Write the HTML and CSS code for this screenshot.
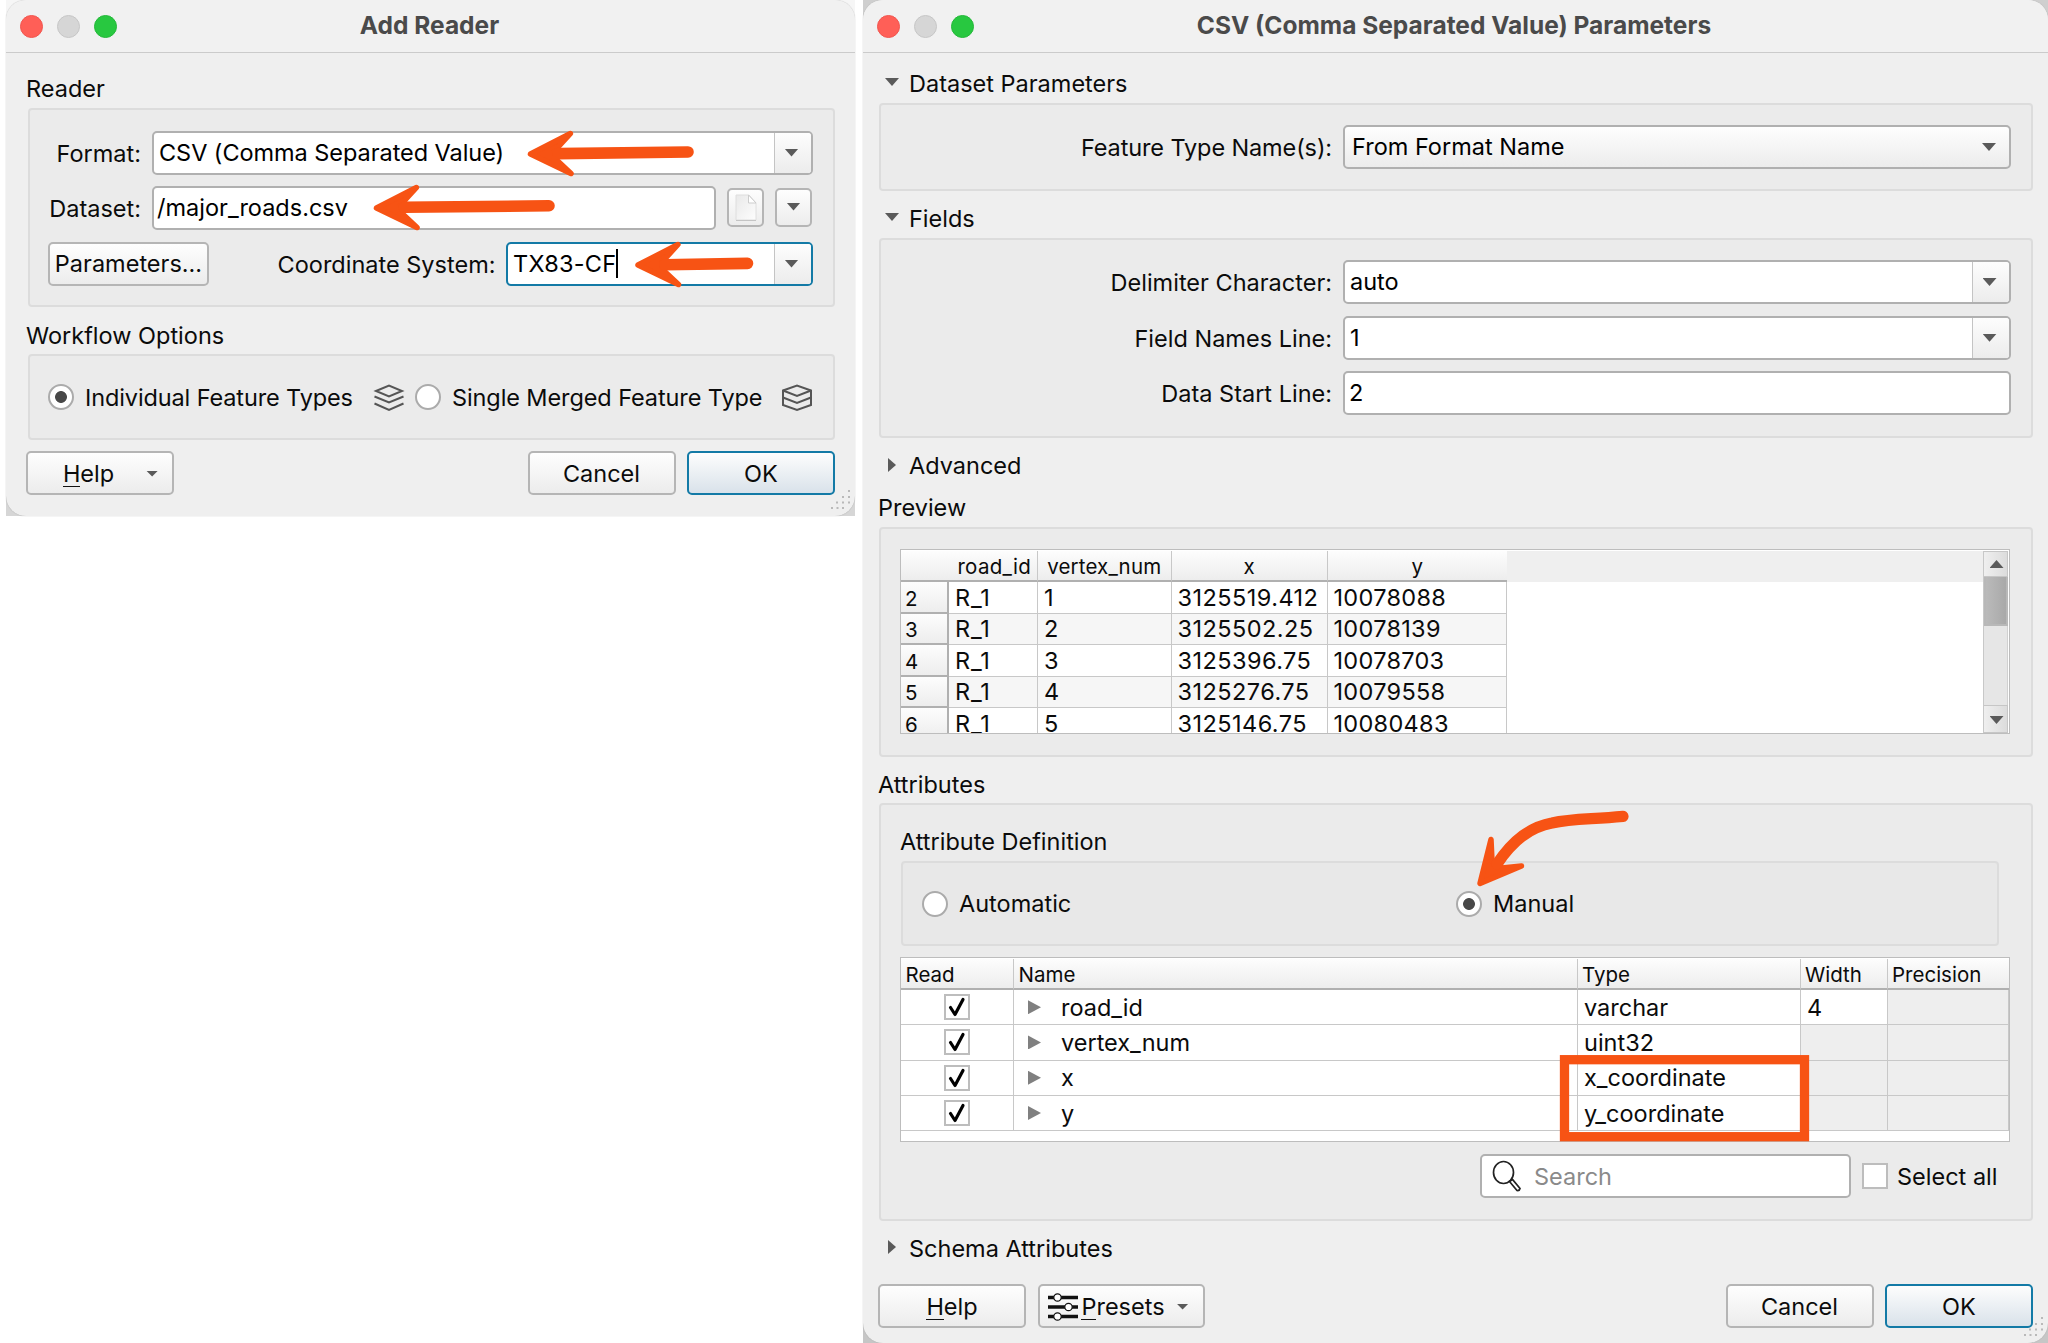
FILE: index.html
```html
<!DOCTYPE html>
<html lang="en">
<head>
<meta charset="utf-8">
<title>Add Reader</title>
<link rel="stylesheet" href="styles.css">
</head>
<body>
<main class="desktop">
  <section class="backing backing-reader">
    <div class="window">
      <header class="titlebar"><span class="light red"></span><span class="light grey"></span><span class="light green"></span><h1>Add Reader</h1></header>
      <div class="content">
        <h2 class="first-label">Reader</h2>
        <div class="group reader-group">
          <div class="row">
            <label class="name">Format:</label>
            <div class="field combo grow"><span class="format">CSV (Comma Separated Value)</span><i class="drop"><b class="down"></b></i></div>
          </div>
          <div class="row">
            <label class="name">Dataset:</label>
            <div class="field dataset"><span>/major_roads.csv</span></div>
            <button class="tool"><svg width="24" height="30" viewBox="0 0 24 30"><defs><linearGradient id="pg" x1="0" y1="0" x2="1" y2="1"><stop offset="0" stop-color="#e9e9e9"/><stop offset="1" stop-color="#fdfdfd"/></linearGradient></defs><path d="M2 2h13l7 8v17H2z" fill="url(#pg)" stroke="#dedede"/><path d="M2 27.500h20" stroke="#c4c4c4"/><path d="M14.500 2v8H22z" fill="#fff" stroke="#cdcdcd"/></svg></button>
            <button class="tool last"><b class="down"></b></button>
          </div>
          <div class="row">
            <button class="btn params">Parameters...</button>
            <label class="coord">Coordinate System:</label>
            <div class="field combo focus grow"><span class="code">TX83-CF</span><em class="caret"></em><i class="drop"><b class="down"></b></i></div>
          </div>
        </div>
        <h2 class="second-label">Workflow Options</h2>
        <div class="group options">
          <span class="radio on"></span><label class="opt1">Individual Feature Types</label>
          <svg class="stack" width="32" height="30" viewBox="0 0 32 30" fill="none" stroke="#555" stroke-width="2"><path d="M3 8L16 2.500L29 8L16 13.500Z"/><path d="M1.500 13.500L16 19.500L30.500 13.500M1.500 20.500L16 27L30.500 20.500"/></svg>
          <span class="radio radio2"></span><label class="opt2">Single Merged Feature Type</label>
          <svg class="stack2" width="32" height="30" viewBox="0 0 32 30" fill="none" stroke="#555" stroke-width="2"><path d="M2 7.500L16 2.500L30 7.500V22L16 27L2 22Z"/><path d="M2 7.500L16 13L30 7.500M2 14.500L16 20L30 14.500"/></svg>
        </div>
        <footer class="buttons">
          <button class="btn std help-menu"><span><u>H</u>elp</span><b class="down small"></b></button>
          <span class="grow"></span>
          <button class="btn std">Cancel</button>
          <button class="btn std default">OK</button>
        </footer>
      </div>
      <svg class="grip" width="24" height="26" viewBox="0 0 24 26"><g fill="#b9b9b9"><path d="M18 1h2v2h-2zM12 7h2v2h-2zM18 7h2v2h-2zM6 12.500h2v2H6zM12 12.500h2v2h-2zM18 12.500h2v2h-2zM1 18h2v2H1zM6.500 18h2v2h-2zM12 18h2v2h-2z"/></g></svg>
    </div>
  </section>

  <section class="backing backing-params">
    <div class="window">
      <header class="titlebar"><span class="light red"></span><span class="light grey"></span><span class="light green"></span><h1>CSV (Comma Separated Value) Parameters</h1></header>
      <div class="content">
        <h2 class="fold fold1"><b class="down tri"></b>Dataset Parameters</h2>
        <div class="group form single">
          <div class="row"><label class="wide tight">Feature Type Name(s):</label><div class="field select grow"><span>From Format Name</span><b class="down"></b></div></div>
        </div>
        <h2 class="fold fold2"><b class="down tri"></b>Fields</h2>
        <div class="group form triple">
          <div class="row"><label class="wide">Delimiter Character:</label><div class="field combo grow"><span>auto</span><i class="drop"><b class="down"></b></i></div></div>
          <div class="row"><label class="wide">Field Names Line:</label><div class="field combo grow"><span>1</span><i class="drop"><b class="down"></b></i></div></div>
          <div class="row"><label class="wide">Data Start Line:</label><div class="field grow start"><span>2</span></div></div>
        </div>
        <h2 class="fold fold3"><b class="right tri"></b>Advanced</h2>
        <h2 class="preview-label">Preview</h2>
        <div class="group preview">
          <div class="table-box">
            <div class="grid">
              <div class="tr th"><span class="corner"></span><span class="hc">road_id</span><span class="hc">vertex_num</span><span class="hc">x</span><span class="hc">y</span></div>
              <div class="tr"><span class="rh">2</span><span>R_1</span><span>1</span><span>3125519.412</span><span>10078088</span></div>
              <div class="tr alt"><span class="rh">3</span><span>R_1</span><span>2</span><span>3125502.25</span><span>10078139</span></div>
              <div class="tr"><span class="rh">4</span><span>R_1</span><span>3</span><span>3125396.75</span><span>10078703</span></div>
              <div class="tr alt"><span class="rh">5</span><span>R_1</span><span>4</span><span>3125276.75</span><span>10079558</span></div>
              <div class="tr"><span class="rh">6</span><span>R_1</span><span>5</span><span>3125146.75</span><span>10080483</span></div>
            </div>
            <div class="blank"></div>
            <div class="scroll"><i class="sbtn"><b class="up"></b></i><i class="thumb"></i><i class="track"></i><i class="sbtn end"><b class="down"></b></i></div>
          </div>
        </div>
        <h2 class="attr-label">Attributes</h2>
        <div class="group attrs">
          <h3>Attribute Definition</h3>
          <div class="group definition"><span class="radio"></span><label class="auto">Automatic</label><span class="radio on"></span><label>Manual</label></div>
          <div class="attr-table">
            <div class="ar ah"><span>Read</span><span>Name</span><span>Type</span><span>Width</span><span>Precision</span></div>
            <div class="ar"><span class="ck"><i class="check"><svg width="18" height="22" viewBox="0 0 18 22"><path d="M2.500 11.500L7 18.500L15 3.500" /></svg></i></span><span class="nm"><b class="right node"></b>road_id</span><span>varchar</span><span>4</span><span class="off"></span></div>
            <div class="ar"><span class="ck"><i class="check"><svg width="18" height="22" viewBox="0 0 18 22"><path d="M2.500 11.500L7 18.500L15 3.500" /></svg></i></span><span class="nm"><b class="right node"></b>vertex_num</span><span>uint32</span><span class="off"></span><span class="off"></span></div>
            <div class="ar"><span class="ck"><i class="check"><svg width="18" height="22" viewBox="0 0 18 22"><path d="M2.500 11.500L7 18.500L15 3.500" /></svg></i></span><span class="nm"><b class="right node"></b>x</span><span>x_coordinate</span><span class="off"></span><span class="off"></span></div>
            <div class="ar"><span class="ck"><i class="check"><svg width="18" height="22" viewBox="0 0 18 22"><path d="M2.500 11.500L7 18.500L15 3.500" /></svg></i></span><span class="nm"><b class="right node"></b>y</span><span>y_coordinate</span><span class="off"></span><span class="off"></span></div>
          </div>
          <div class="search-row">
            <div class="field search"><svg width="32" height="34" viewBox="0 0 32 34" fill="none" stroke="#222"><ellipse cx="12.500" cy="13.500" rx="10" ry="11" stroke-width="1.700"/><path d="M18.500 22.500L26 31.500Q28.500 32 29 29.500L21.500 20.500Z" stroke-width="1.700"/></svg><span>Search</span></div>
            <i class="check"></i><label>Select all</label>
          </div>
        </div>
        <h2 class="fold fold4"><b class="right tri"></b>Schema Attributes</h2>
        <footer class="buttons">
          <button class="btn std"><span><u>H</u>elp</span></button>
          <button class="btn presets"><svg width="30" height="28" viewBox="0 0 30 28"><path d="M0 4.500h30M0 14h30M0 23.500h30" stroke="#111" stroke-width="3.600"/><g fill="#fff" stroke="#111" stroke-width="1.200"><circle cx="9.500" cy="4.500" r="3.700"/><circle cx="20.500" cy="14" r="3.700"/><circle cx="9.500" cy="23.500" r="3.700"/></g></svg><span><u>P</u>resets</span><b class="down small"></b></button>
          <span class="grow"></span>
          <button class="btn std">Cancel</button>
          <button class="btn std default">OK</button>
        </footer>
      </div>
      <svg class="grip" width="24" height="26" viewBox="0 0 24 26"><g fill="#b9b9b9"><path d="M18 1h2v2h-2zM12 7h2v2h-2zM18 7h2v2h-2zM6 12.500h2v2H6zM12 12.500h2v2h-2zM18 12.500h2v2h-2zM1 18h2v2H1zM6.500 18h2v2h-2zM12 18h2v2h-2z"/></g></svg>
    </div>
  </section>

  <svg class="marks" width="2048" height="1343" viewBox="0 0 2048 1343">
    <defs><path id="head" d="M3 0L43 -20.500L27 -3L27 4L43.500 19.500Z" stroke-width="5.500"/></defs>
    <g fill="#f75314" stroke="#f75314" stroke-linejoin="round" stroke-linecap="round">
      <use href="#head" x="527.500" y="154"/><path d="M558 153.600L688 152" stroke-width="11.600"/>
      <use href="#head" x="373.500" y="208"/><path d="M404 207.300L549 205.800" stroke-width="11.600"/>
      <use href="#head" x="635" y="265"/><path d="M665 264.700L747.500 263.400" stroke-width="11.600"/>
      <path d="M1480 883.500L1491 839.500L1492 861L1502 868L1521.500 866Z" stroke-width="5.500"/>
      <path d="M1497 864C1514 839 1531 827 1552 823C1572 818.500 1590 819.500 1623 816.400" fill="none" stroke-width="11.200"/>
    </g>
    <rect x="1564.500" y="1059.700" width="240" height="77" fill="none" stroke="#f75314" stroke-width="9.300"/>
  </svg>
</main>
</body>
</html>
```

FILE: styles.css
```css
* { box-sizing: border-box; }
body { margin: 0; background: #fff; color: #0b0b0b; font: 23.500px/38px Inter, "Liberation Sans", sans-serif; overflow: hidden; }
h1, h2, h3 { margin: 0; font-size: inherit; font-weight: 400; white-space: nowrap; }
label, span { white-space: nowrap; }
label { flex: none; }
button { font: inherit; color: inherit; padding: 0; margin: 0; }
u { text-decoration: none; display: inline-block; line-height: 24px; border-bottom: 1.500px solid #111; }
.desktop { position: relative; width: 2048px; height: 1343px; display: flex; align-items: flex-start; padding-left: 6px; }
.grow { flex: 1; }

/* windows */
.backing-reader { width: 849px; height: 516px; background: linear-gradient(#f6f6f6 50%, #d6d6d6 50%); }
.backing-params { width: 1185px; height: 1343px; margin-left: 8px; background: linear-gradient(#cfcfcf 50%, #c6c6c6 50%); }
.window { position: relative; height: 100%; border-radius: 20px; background: #efefef; box-shadow: 0 0 1px #999; overflow: hidden; }
.titlebar { position: relative; display: flex; align-items: center; gap: 14px; height: 53px; padding-left: 14px; border-bottom: 1px solid #cbcbcb; background: #f1f1f1; }
.titlebar h1 { position: absolute; inset: 0; text-align: center; font-size: 24.500px; font-weight: 700; line-height: 50px; color: #4a4a4a; padding-right: 2px; }
.backing-params .titlebar h1 { padding-right: 3px; }
.light { width: 23px; height: 23px; border-radius: 50%; border: 1px solid; }
.red { background: #ff5f57; border-color: #f0564f; }
.grey { background: #d6d6d6; border-color: #c6c6c6; }
.green { background: #28c840; border-color: #24b839; }
.content { padding: 0 20px; }
.grip { position: absolute; right: 1px; bottom: 1px; }

/* groups and fields */
.group { border: 2px solid #dcdcdc; border-radius: 4px; background: #ebebeb; }
.row { display: flex; height: 44px; }
.field { display: flex; align-items: center; height: 44px; border: 2px solid #b0b0b0; border-radius: 5px; background: #fff; padding-left: 5px; color: #000; overflow: hidden; }
.field span { line-height: 40px; }
.combo .drop { margin-left: auto; width: 37px; height: 40px; border-left: 1px solid #c4c4c4; background: linear-gradient(#fdfdfd, #ececec); display: flex; align-items: center; justify-content: center; padding-right: 3px; }
.focus { border-color: #137aa6; }
.format { letter-spacing: -0.050px; }
.code { letter-spacing: 0.250px; }
.caret { width: 2px; height: 29px; background: #000; }
.select { background: linear-gradient(#fefefe, #ececec); justify-content: space-between; padding: 0 13px 0 7px; }
.start { padding-left: 4px; }
.btn, .tool { border: 2px solid #b5b5b5; border-radius: 5px; background: linear-gradient(#fefefe, #ececec); display: flex; align-items: center; justify-content: center; }
.btn { height: 44px; }
.std { width: 148px; }
.default { border-color: #137aa6; background: linear-gradient(#fdfdfd, #d9e2ea); }
.buttons { display: flex; gap: 11.500px; }
.buttons .btn { padding-top: 1px; }
.down, .up, .right { display: block; width: 14px; height: 8px; background: #5a5a5a; clip-path: polygon(0 0, 100% 0, 50% 100%); }
.up { clip-path: polygon(50% 0, 100% 100%, 0 100%); }
.right { width: 8px; height: 14px; clip-path: polygon(0 0, 100% 50%, 0 100%); }
.small { width: 12px; height: 6px; }
.radio { width: 26px; height: 26px; border: 2px solid #ababab; border-radius: 50%; background: #fff; flex: none; }
.on { background: radial-gradient(circle, #484848 0 5.500px, #fff 6.300px); }
.check { display: block; width: 26px; height: 26px; border: 2px solid #bdbdbd; background: #fff; flex: none; }
.check svg { display: block; margin-left: 2px; }
.check path { fill: none; stroke: #000; stroke-width: 3.200; stroke-linecap: round; stroke-linejoin: round; }

/* reader dialog */
.first-label { margin-top: 17px; }
.reader-group { margin-left: 2px; height: 199px; padding: 20.500px 20px 0 18px; display: flex; flex-direction: column; gap: 11.500px; }
.name { width: 93px; text-align: right; margin-right: 11px; line-height: 45px; }
.dataset { width: 564px; padding-left: 3px; }
.tool { width: 37px; height: 39px; margin: 2px 0 0 11px; }
.tool .down { margin-top: -2px; }
.params { width: 161px; }
.coord { width: 286.500px; text-align: right; margin-right: 10.500px; line-height: 46px; }
.second-label { margin-top: 9px; line-height: 40px; height: 38px; }
.options { margin: 0 0 11px 2px; height: 86px; display: flex; align-items: center; padding-left: 18px; }
.options label { line-height: 28px; padding-top: 2px; }
.opt1 { width: 288px; margin-left: 11px; letter-spacing: -0.120px; }
.stack, .stack2 { flex: none; margin-top: 2px; }
.radio2 { margin-left: 10px; }
.opt2 { width: 317px; margin-left: 11px; letter-spacing: -0.100px; }
.stack2 { margin-left: 12px; }
.help-menu .down { margin-left: 32px; margin-right: -21px; }

/* parameters dialog */
.backing-params .content { padding: 0 15px; }
.fold { display: flex; height: 38px; line-height: 37px; padding-left: 7px; }
.tri { margin: 13px 10px 0 0; }
.right.tri { margin: 11px 13px 0 3px; }
.fold1 { margin-top: 12px; }
.fold2, .fold3 { margin-top: 9px; }
.fold3 { line-height: 38px; }
.fold4 { margin: 8px 0 17px; line-height: 39px; }
.form { margin-left: 1px; padding: 20px 20px 0 0; display: flex; flex-direction: column; gap: 11.700px; }
.single { height: 88px; }
.triple { height: 200px; }
.wide { width: 451px; margin-right: 11px; text-align: right; line-height: 45px; }
.tight { letter-spacing: -0.120px; }
.preview-label { margin-top: 2px; height: 40px; line-height: 42px; }
.preview { height: 230px; margin-left: 1px; padding: 20px 0 0 19px; }
.table-box { display: flex; width: 1110px; height: 185px; border: 1.500px solid #bdbdbd; background: #fff; overflow: hidden; padding-top: 1px; }
.grid { width: 606px; flex: none; }
.tr { display: grid; grid-template-columns: 48px 89px 133.500px 156px 179.500px; height: 31.500px; line-height: 28px; }
.tr span { border-right: 1.500px solid #c8c8c8; border-bottom: 1.500px solid #c8c8c8; padding: 1.500px 0 0 6px; overflow: hidden; }
.tr span:nth-child(2) { letter-spacing: 1px; }
.tr span:nth-child(4) { letter-spacing: 0.450px; }
.tr span:nth-child(5) { letter-spacing: 0.300px; }
.tr.alt span { background: #f6f6f6; }
.tr.th { height: 31px; }
.tr .hc.hc, .tr .corner { border-bottom: 2px solid #b0b0b0; background: linear-gradient(#fdfdfd, #ededed); font-size: 20.500px; line-height: 26px; text-align: center; padding: 3px 0 0; letter-spacing: 0; }
.tr .corner { border-right: 0; }
.tr .hc.hc:nth-child(2) { text-align: right; padding-right: 6px; letter-spacing: 0.300px; }
.tr .hc.hc:nth-child(3) { letter-spacing: 0.150px; }
.tr .hc:last-child { border-right: 0; }
.tr .rh, .tr.alt .rh { border-right: 2px solid #b0b0b0; border-bottom: 2px solid #b0b0b0; background: linear-gradient(#fdfdfd, #ededed); font-size: 20.500px; padding: 3.500px 0 0 4px; line-height: 26px; }
.blank { flex: 1; height: 31px; background: #efefef; }
.scroll { width: 25px; margin-right: 1px; display: flex; flex-direction: column; border-left: 1px solid #c8c8c8; background: #e6e6e6; }
.sbtn { height: 26px; border: 1.500px solid #c6c6c6; border-left: 0; background: linear-gradient(90deg, #efefef, #dcdcdc); display: flex; align-items: center; justify-content: center; padding-left: 2px; }
.thumb { height: 49px; border: 2px solid #b8b8b8; border-top: 0; background: linear-gradient(90deg, #bababa, #a9a9a9); }
.track { flex: 1; border-right: 1.500px solid #d0d0d0; }
.sbtn.end { height: 28px; padding-top: 2px; }
.attr-label { margin-top: 8px; height: 38px; line-height: 40px; }
.attrs { height: 418px; margin-left: 1px; padding: 17px 21px 0 19px; }
.attrs h3 { line-height: 39px; }
.definition { height: 85px; width: 1098px; margin-left: 1px; background: #e8e8e8; display: flex; align-items: center; padding-left: 18.500px; }
.definition label { margin-left: 11.500px; }
.auto { width: 496.500px; }
.attr-table { margin-top: 11px; width: 1110px; height: 185px; border: 1.500px solid #bdbdbd; background: #fff; padding-top: 1px; }
.ar { display: grid; grid-template-columns: 113px 563.500px 223px 87px 1fr; height: 35.300px; line-height: 33px; }
.ar span { display: flex; border-right: 1.500px solid #c8c8c8; border-bottom: 1.500px solid #c8c8c8; padding-left: 6.500px; align-items: center; }
.ar.ah { height: 31px; }
.ah span { border-bottom: 2px solid #b0b0b0; background: linear-gradient(#fdfdfd, #ededed); font-size: 20.500px; padding: 3px 0 0 4.500px; line-height: 26px; }
.ah span:last-child { border-right: 0; }
.ar .off { background: #eee; }
.ar .ck { padding-left: 43px; }
.ar .nm { padding-left: 14px; }
.node { width: 13px; margin-right: 20px; background: #808080; }
.search-row { display: flex; align-items: center; margin-top: 12px; padding-left: 580px; }
.search { width: 371px; padding-left: 9px; margin-right: 11px; color: #8a8a8a; }
.search span { margin-left: 11px; padding-top: 1px; }
.search-row label { margin-left: 9px; padding-top: 1px; }
.presets { width: 167px; }
.presets svg { margin-right: 3px; margin-left: -5px; }
.presets .down { margin-left: 12px; }

.marks { position: absolute; left: 0; top: 0; pointer-events: none; }
```
